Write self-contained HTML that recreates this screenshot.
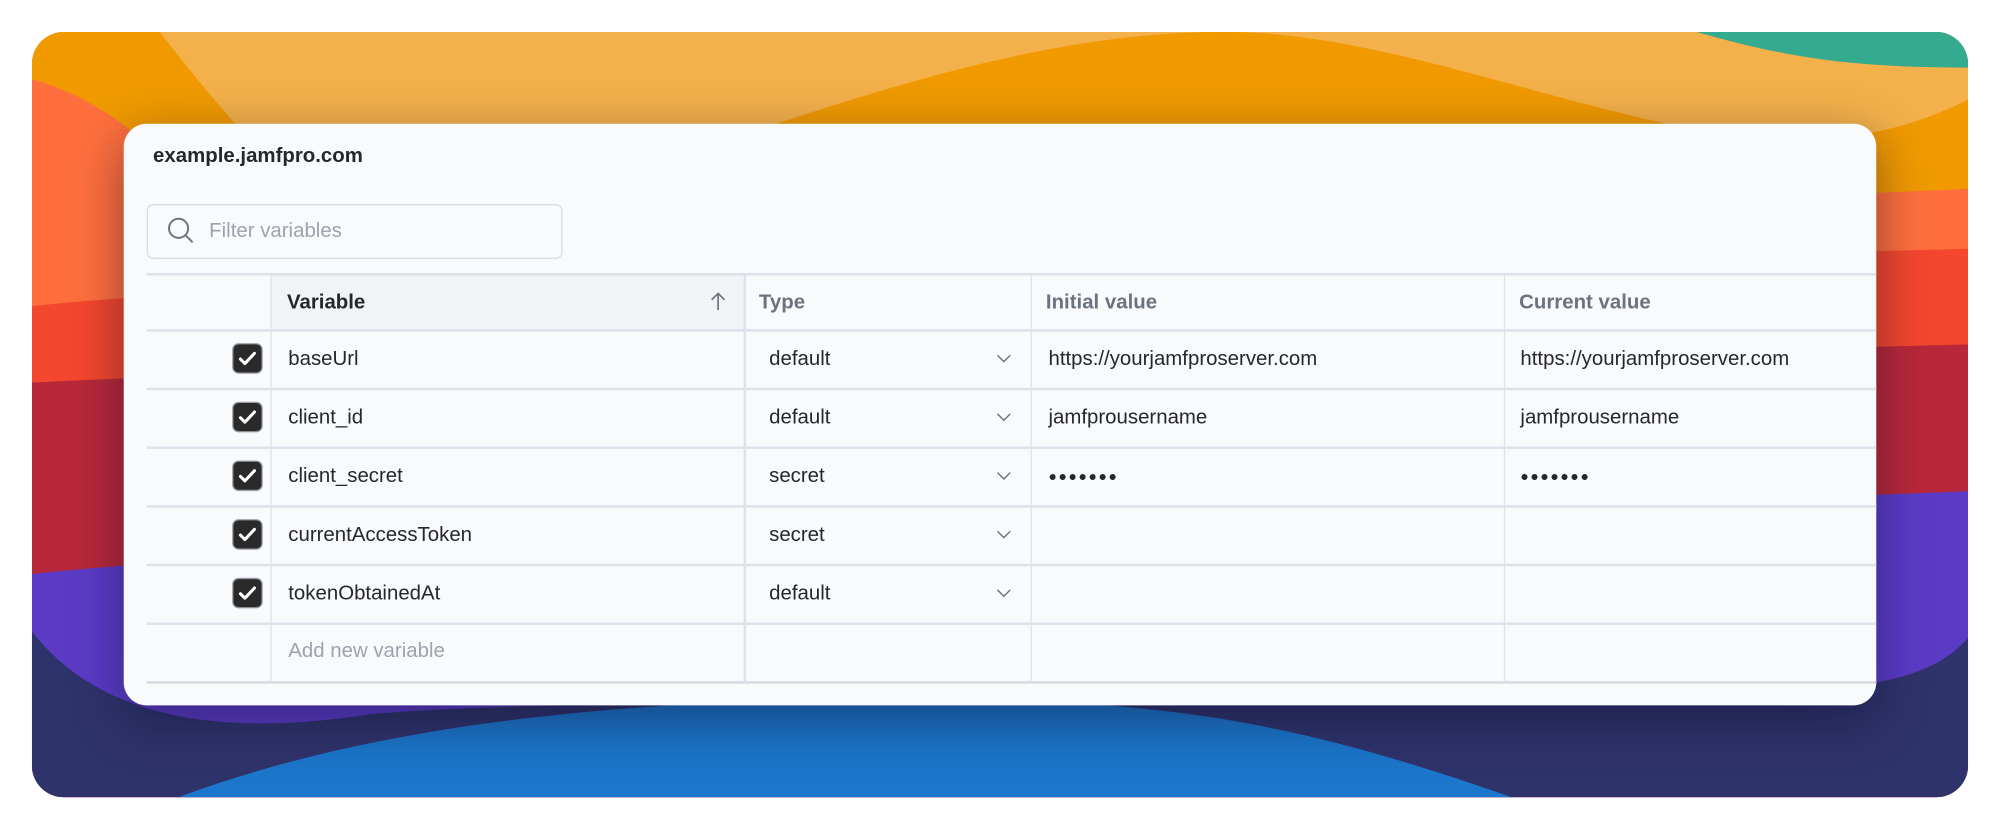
<!DOCTYPE html>
<html><head><meta charset="utf-8"><style>
html,body{margin:0;padding:0;background:#fff;width:2000px;height:829px;overflow:hidden}
#s{position:absolute;left:0;top:0;width:1568px;height:650px;transform:scale(1.27551);transform-origin:0 0;font-family:"Liberation Sans",sans-serif}
#bg{position:absolute;left:25px;top:25px;width:1518px;height:600px;border-radius:25px;overflow:hidden}
#card{position:absolute;left:97px;top:97px;width:1374px;height:456px;background:#f9fafb;border-radius:18px;box-shadow:0 12px 40px rgba(10,10,40,.45)}
.t{position:absolute;white-space:nowrap;font-size:16px;color:#25272c}
.h{position:absolute;height:1px;background:#dde2ea}
.v{position:absolute;width:1px;background:#dde2ea}
.cb{position:absolute;left:86px;width:22px;height:22px;background:#2a2a2a;border-radius:4px;box-shadow:0 0 0 1px #9aa0a8}
.cb svg{position:absolute;left:3px;top:3px}
.ch{position:absolute;left:684px}
.d{position:absolute;white-space:nowrap;font-size:11px;letter-spacing:1.2px;color:#25272c}
</style></head><body><div id="s">
<div id="bg"><svg width="1518" height="600" viewBox="25 25 1518 600" style="display:block">
<rect x="25" y="25" width="1518" height="600" fill="#f4b04a"/>
<path d="M25,25 L125,25 C200,120 260,190 360,210 L25,210Z" fill="#f09a00"/>
<path d="M600,100 C720,60 840,25 960,25 C1100,25 1250,100 1420,115 L1420,220 L600,220Z" fill="#f09a00"/>
<path d="M1380,220 L1380,112 C1450,112 1500,100 1543,78 L1543,220Z" fill="#f09a00"/>
<path d="M1330,25 C1400,45 1450,53 1543,53 L1543,25Z" fill="#34aa8e"/>
<path d="M25,62 C90,80 140,130 200,200 C600,180 1300,160 1543,148 L1543,650 L25,650Z" fill="#ff6f3d"/>
<path d="M25,240 C300,210 1200,205 1543,195 L1543,650 L25,650Z" fill="#f4472d"/>
<path d="M25,300 C300,285 1200,280 1543,270 L1543,650 L25,650Z" fill="#b8283a"/>
<path d="M25,450 C300,420 1200,400 1543,385 L1543,650 L25,650Z" fill="#5b3bc6"/>
<path d="M25,495 C60,540 130,585 290,560 C500,540 1300,560 1471,535 C1510,528 1530,515 1543,500 L1543,650 L25,650Z" fill="#2f336b"/>
<path d="M140,625 C300,565 500,548 700,548 C900,548 1000,560 1185,625Z" fill="#1c76cb"/>
</svg></div>
<div id="card">
<div class="t" style="left:23px;top:17px;font-weight:bold;font-size:16px">example.jamfpro.com</div>
<div style="position:absolute;left:18px;top:63px;width:324px;height:41px;border:1px solid #d6dbe3;border-radius:5px;background:#f9fafb"></div>
<svg style="position:absolute;left:34px;top:73px" width="22" height="22" viewBox="0 0 22 22" fill="none" stroke="#6b7280" stroke-width="1.5"><circle cx="9" cy="9" r="7.5"/><path d="M14.5 14.5L20 20"/></svg>
<div class="t" style="left:67px;top:76px;color:#9ca3af">Filter variables</div>
<div style="position:absolute;left:116px;top:118px;width:370px;height:43px;background:#f2f3f6"></div>
<div class="h" style="left:18px;right:0;top:117px;height:2px"></div>
<div class="h" style="left:18px;right:0;top:161px;height:2px"></div>
<div class="h" style="left:18px;right:0;top:207px;height:2px"></div>
<div class="h" style="left:18px;right:0;top:253px;height:2px"></div>
<div class="h" style="left:18px;right:0;top:299px;height:2px"></div>
<div class="h" style="left:18px;right:0;top:345px;height:2px"></div>
<div class="h" style="left:18px;right:0;top:391px;height:2px"></div>
<div class="h" style="left:18px;right:0;top:437px;height:2px;background:#d5dbe4"></div>
<div class="v" style="left:115px;top:118px;height:320px"></div>
<div class="v" style="left:486px;top:118px;height:320px;width:2px"></div>
<div class="v" style="left:711px;top:118px;height:320px"></div>
<div class="v" style="left:1082px;top:118px;height:320px"></div>
<div class="t" style="left:128px;top:132px;font-weight:bold;color:#25272c">Variable</div>
<svg style="position:absolute;left:459px;top:131px" width="14" height="16" viewBox="0 0 14 16" fill="none" stroke="#6b7280" stroke-width="1.3"><path d="M7 15V2M2 7l5-5 5 5"/></svg>
<div class="t" style="left:498px;top:132px;font-weight:bold;color:#6b7280">Type</div>
<div class="t" style="left:723px;top:132px;font-weight:bold;color:#6b7280">Initial value</div>
<div class="t" style="left:1094px;top:132px;font-weight:bold;color:#6b7280">Current value</div>

<div class="cb" style="top:173px"><svg width="16" height="16" viewBox="0 0 16 16" fill="none" stroke="#fff" stroke-width="2.4" stroke-linecap="round" stroke-linejoin="round"><path d="M2.5 8.5l3.5 3.5 7.5-8"/></svg></div>
<div class="cb" style="top:219px"><svg width="16" height="16" viewBox="0 0 16 16" fill="none" stroke="#fff" stroke-width="2.4" stroke-linecap="round" stroke-linejoin="round"><path d="M2.5 8.5l3.5 3.5 7.5-8"/></svg></div>
<div class="cb" style="top:265px"><svg width="16" height="16" viewBox="0 0 16 16" fill="none" stroke="#fff" stroke-width="2.4" stroke-linecap="round" stroke-linejoin="round"><path d="M2.5 8.5l3.5 3.5 7.5-8"/></svg></div>
<div class="cb" style="top:311px"><svg width="16" height="16" viewBox="0 0 16 16" fill="none" stroke="#fff" stroke-width="2.4" stroke-linecap="round" stroke-linejoin="round"><path d="M2.5 8.5l3.5 3.5 7.5-8"/></svg></div>
<div class="cb" style="top:357px"><svg width="16" height="16" viewBox="0 0 16 16" fill="none" stroke="#fff" stroke-width="2.4" stroke-linecap="round" stroke-linejoin="round"><path d="M2.5 8.5l3.5 3.5 7.5-8"/></svg></div>

<div class="t" style="left:129px;top:176px">baseUrl</div>
<div class="t" style="left:129px;top:222px">client_id</div>
<div class="t" style="left:129px;top:268px">client_secret</div>
<div class="t" style="left:129px;top:314px">currentAccessToken</div>
<div class="t" style="left:129px;top:360px">tokenObtainedAt</div>
<div class="t" style="left:129px;top:405px;color:#9ca3af">Add new variable</div>

<div class="t" style="left:506px;top:176px">default</div>
<div class="t" style="left:506px;top:222px">default</div>
<div class="t" style="left:506px;top:268px">secret</div>
<div class="t" style="left:506px;top:314px">secret</div>
<div class="t" style="left:506px;top:360px">default</div>
<svg class="ch" style="top:180px" width="12" height="8" viewBox="0 0 12 8" fill="none" stroke="#6b7280" stroke-width="1.1"><path d="M1 1.5l5 5 5-5"/></svg>
<svg class="ch" style="top:226px" width="12" height="8" viewBox="0 0 12 8" fill="none" stroke="#6b7280" stroke-width="1.1"><path d="M1 1.5l5 5 5-5"/></svg>
<svg class="ch" style="top:272px" width="12" height="8" viewBox="0 0 12 8" fill="none" stroke="#6b7280" stroke-width="1.1"><path d="M1 1.5l5 5 5-5"/></svg>
<svg class="ch" style="top:318px" width="12" height="8" viewBox="0 0 12 8" fill="none" stroke="#6b7280" stroke-width="1.1"><path d="M1 1.5l5 5 5-5"/></svg>
<svg class="ch" style="top:364px" width="12" height="8" viewBox="0 0 12 8" fill="none" stroke="#6b7280" stroke-width="1.1"><path d="M1 1.5l5 5 5-5"/></svg>

<div class="t" style="left:725px;top:176px">https://yourjamfproserver.com</div>
<div class="t" style="left:725px;top:222px">jamfprousername</div>
<div class="d" style="left:725px;top:271px">●●●●●●●</div>
<div class="t" style="left:1095px;top:176px">https://yourjamfproserver.com</div>
<div class="t" style="left:1095px;top:222px">jamfprousername</div>
<div class="d" style="left:1095px;top:271px">●●●●●●●</div>
</div>
</div></body></html>
